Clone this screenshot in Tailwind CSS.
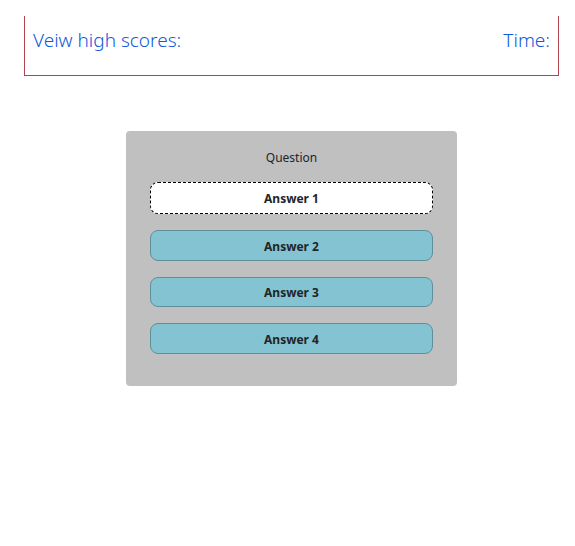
<!DOCTYPE html>
<html lang="en">
<head>
<meta charset="utf-8">
<meta name="viewport" content="width=device-width, initial-scale=1">
<title>Quiz</title>
<script src="https://cdn.jsdelivr.net/npm/@tailwindcss/browser@4"></script>
</head>
<body class="bg-white pt-4 pr-4 pl-6 font-['Segoe_UI','Noto_Sans','Open_Sans',sans-serif] text-[#212529]">
  <header class="flex items-start justify-between border-x border-b border-[#b04350] px-2 pt-2 pb-[18px] text-[19px] leading-[33px] font-light text-[#1058dc]">
    <a href="#scores">Veiw high scores:</a>
    <p>Time:</p>
  </header>
  <main class="mx-auto mt-[55px] w-[62%] rounded bg-[#c0c0c0] px-6 pt-4 pb-8">
    <h1 class="text-center text-xs leading-[22px] font-normal">Question</h1>
    <div class="mt-[13px] flex flex-col gap-4 text-xs font-bold">
      <button type="button" class="h-8 rounded-lg border border-dashed border-black bg-white pt-0.5">Answer 1</button>
      <button type="button" class="h-[31px] rounded-lg border border-[#5f8f9b] bg-[#84c3d2] pt-0.5">Answer 2</button>
      <button type="button" class="h-[30px] rounded-lg border border-[#5f8f9b] bg-[#84c3d2] pt-0.5">Answer 3</button>
      <button type="button" class="h-[31px] rounded-lg border border-[#5f8f9b] bg-[#84c3d2] pt-0.5">Answer 4</button>
    </div>
  </main>
</body>
</html>
